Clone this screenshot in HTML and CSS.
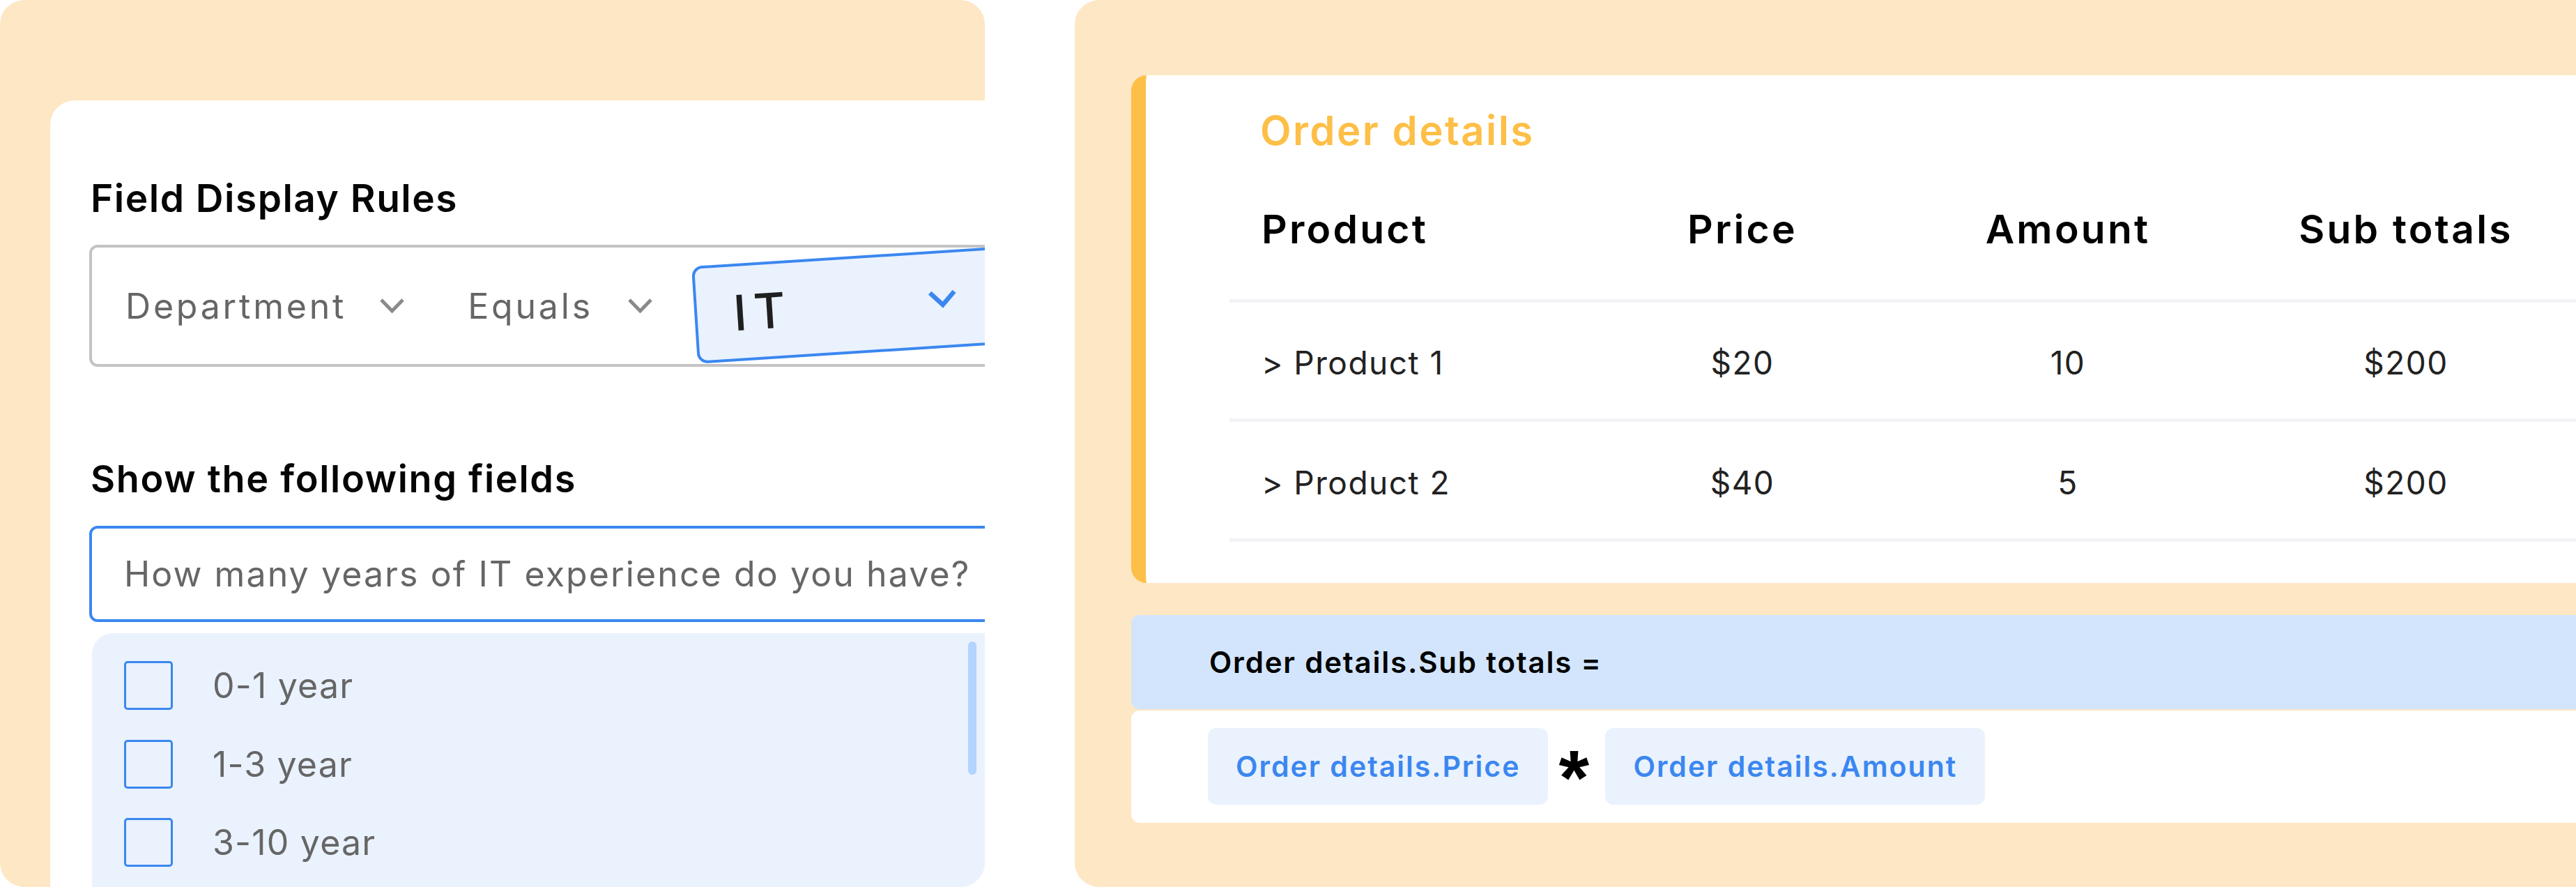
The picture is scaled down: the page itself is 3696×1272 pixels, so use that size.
FILE: index.html
```html
<!DOCTYPE html>
<html lang="en">
<head>
<meta charset="utf-8">
<title>Field rules and order details</title>
<link rel="stylesheet" href="styles.css">
</head>
<body>
<div class="stage">
  <section class="left-panel">
    <div class="rules-card">
      <h2 class="section-title">Field Display Rules</h2>
      <div class="rule-box">
        <span class="rule-field">Department</span>
        <svg class="chev chev-gray" width="35" height="23" viewBox="0 0 35 23"><polyline points="2,3 17.5,19 33,3" fill="none" stroke="#8a8a8a" stroke-width="5"/></svg>
        <span class="rule-op">Equals</span>
        <svg class="chev chev-gray chev-op" width="35" height="23" viewBox="0 0 35 23"><polyline points="2,3 17.5,19 33,3" fill="none" stroke="#8a8a8a" stroke-width="5"/></svg>
        <div class="rule-value">
          <span class="rule-value-text">IT</span>
          <svg class="chev" width="41" height="27" viewBox="0 0 41 27"><polyline points="3,3 20.5,21 38,3" fill="none" stroke="#3b87f0" stroke-width="6.5"/></svg>
        </div>
      </div>
      <h2 class="section-title section-title-2">Show the following fields</h2>
      <div class="field-input">How many years of IT experience do you have?</div>
      <div class="options">
        <div class="option"><span class="checkbox"></span><span class="option-label">0-1 year</span></div>
        <div class="option"><span class="checkbox"></span><span class="option-label">1-3 year</span></div>
        <div class="option"><span class="checkbox"></span><span class="option-label">3-10 year</span></div>
        <div class="scrollbar"></div>
      </div>
    </div>
  </section>

  <section class="right-panel">
    <div class="order-card">
      <h3 class="order-title">Order details</h3>
      <div class="order-table">
        <div class="tr tr-head">
          <div class="td td-first">Product</div>
          <div class="td">Price</div>
          <div class="td">Amount</div>
          <div class="td">Sub totals</div>
        </div>
        <div class="tr tr-1">
          <div class="td td-first">&gt; Product 1</div>
          <div class="td">$20</div>
          <div class="td">10</div>
          <div class="td">$200</div>
        </div>
        <div class="tr tr-2">
          <div class="td td-first">&gt; Product 2</div>
          <div class="td">$40</div>
          <div class="td">5</div>
          <div class="td">$200</div>
        </div>
      </div>
    </div>
    <div class="formula-head">Order details.Sub totals =</div>
    <div class="formula-body">
      <span class="chip">Order details.Price</span>
      <span class="op">*</span>
      <span class="chip">Order details.Amount</span>
    </div>
  </section>
</div>
</body>
</html>
```

FILE: styles.css
```css
* { box-sizing: border-box; margin: 0; padding: 0; }

html, body {
  width: 3696px;
  height: 1272px;
  overflow: hidden;
  background: #ffffff;
  font-family: Inter, "Noto Sans", sans-serif;
}

.stage {
  display: flex;
  gap: 129px;
  width: 3696px;
  height: 1272px;
}

/* ---------- left panel ---------- */
.left-panel {
  flex: none;
  width: 1413px;
  height: 1272px;
  background: #fee7c4;
  border-radius: 35px;
  overflow: hidden;
  padding: 144px 0 0 72px;
}

.rules-card {
  width: 1600px;
  height: 1200px;
  background: #ffffff;
  border-radius: 35px 0 0 0;
  padding: 107px 0 0 56px;
}

.section-title {
  font-size: 55px;
  line-height: 66px;
  font-weight: 600;
  letter-spacing: 1.5px;
  color: #050505;
  padding-left: 2px;
}

.section-title-2 { margin-top: 128px; font-size: 54px; letter-spacing: 1.7px; }

.rule-box {
  position: relative;
  display: flex;
  align-items: center;
  width: 1500px;
  height: 175px;
  margin-top: 34px;
  border: 4px solid #c3c3c3;
  border-radius: 12px;
  padding-left: 48px;
  font-size: 50px;
  letter-spacing: 3.8px;
  color: #666666;
}

.chev { display: block; flex: none; }
.chev-gray { margin-left: 48px; }
.rule-op { margin-left: 91px; }
.chev-op { margin-left: 50px; }

.rule-value {
  position: absolute;
  left: 860px;
  top: 27px;
  width: 540px;
  height: 140px;
  border: 4px solid #3b87f0;
  border-radius: 15px;
  background: #eaf2fe;
  transform: rotate(-3.67deg);
  transform-origin: 0 0;
  display: flex;
  align-items: center;
  padding-left: 52px;
}

.rule-value-text {
  width: 280px;
  font-size: 70px;
  font-weight: 500;
  letter-spacing: 10px;
  color: #1f1f1f;
}

.field-input {
  display: flex;
  align-items: center;
  width: 1500px;
  height: 138px;
  margin-top: 34px;
  border: 4px solid #3b87f0;
  border-radius: 12px;
  padding-left: 46px;
  font-size: 50px;
  letter-spacing: 2.1px;
  color: #666666;
  white-space: nowrap;
}

.options {
  position: relative;
  width: 1281px;
  height: 420px;
  margin: 16px 0 0 4px;
  background: #eaf2fe;
  border-radius: 30px 0 0 0;
  padding: 40px 0 0 46px;
  display: flex;
  flex-direction: column;
  gap: 42.5px;
}

.option {
  display: flex;
  align-items: center;
  height: 70px;
}

.checkbox {
  flex: none;
  width: 70px;
  height: 70px;
  border: 3px solid #3b87f0;
  border-radius: 5px;
}

.option-label {
  margin-left: 57px;
  font-size: 50px;
  letter-spacing: 1.2px;
  color: #666666;
}

.scrollbar {
  position: absolute;
  right: 12px;
  top: 12px;
  width: 12px;
  height: 191px;
  border-radius: 6px;
  background: #b3d4fe;
}

/* ---------- right panel ---------- */
.right-panel {
  flex: none;
  width: 2300px;
  height: 1272px;
  background: #fee7c4;
  border-radius: 35px;
  overflow: hidden;
  padding: 108px 0 0 81px;
}

.order-card {
  width: 2300px;
  height: 728px;
  background: #ffffff;
  border-left: 21px solid #fdbf47;
  border-radius: 22px 0 0 22px;
  padding: 44px 0 0 0;
}

.order-title {
  font-size: 58px;
  line-height: 71px;
  font-weight: 600;
  letter-spacing: 2.5px;
  color: #fdbf47;
  padding-left: 164px;
}

.order-table { margin-left: 120px; }

.tr {
  display: grid;
  grid-template-columns: 504px 464px 470px 500px 400px;
  align-items: center;
  border-bottom: 5px solid #f2f3f5;
}

.tr-head { height: 211px; padding-top: 4px; }
.tr-1 { height: 171px; padding-top: 5px; }
.tr-2 { height: 172px; padding-top: 7px; }

.td {
  font-size: 46px;
  letter-spacing: 1.5px;
  color: #222222;
  text-align: center;
}

.td-first { text-align: left; padding-left: 46px; }

.tr-head .td {
  font-size: 57px;
  font-weight: 600;
  letter-spacing: 3.2px;
  color: #000000;
}

.formula-head {
  display: flex;
  align-items: center;
  width: 2300px;
  height: 135px;
  margin-top: 46px;
  background: #d3e5fc;
  border-radius: 12px 0 0 12px;
  padding-left: 112px;
  font-size: 42px;
  font-weight: 600;
  letter-spacing: 1.8px;
  color: #000000;
}

.formula-body {
  display: flex;
  align-items: flex-start;
  width: 2300px;
  height: 161px;
  margin-top: 2px;
  background: #ffffff;
  border-radius: 12px 0 0 12px;
  padding: 25px 0 0 110px;
}

.chip {
  display: flex;
  align-items: center;
  height: 110px;
  padding: 0 40px;
  background: #eaf2fe;
  border-radius: 12px;
  font-size: 41px;
  font-weight: 600;
  letter-spacing: 2px;
  color: #3b87f0;
}

.op {
  width: 82px;
  padding-right: 8px;
  text-align: center;
  font-family: "Liberation Sans", Arial, sans-serif;
  font-weight: 700;
  font-size: 112px;
  line-height: 108px;
  margin-top: 18px;
  color: #000000;
}
```
